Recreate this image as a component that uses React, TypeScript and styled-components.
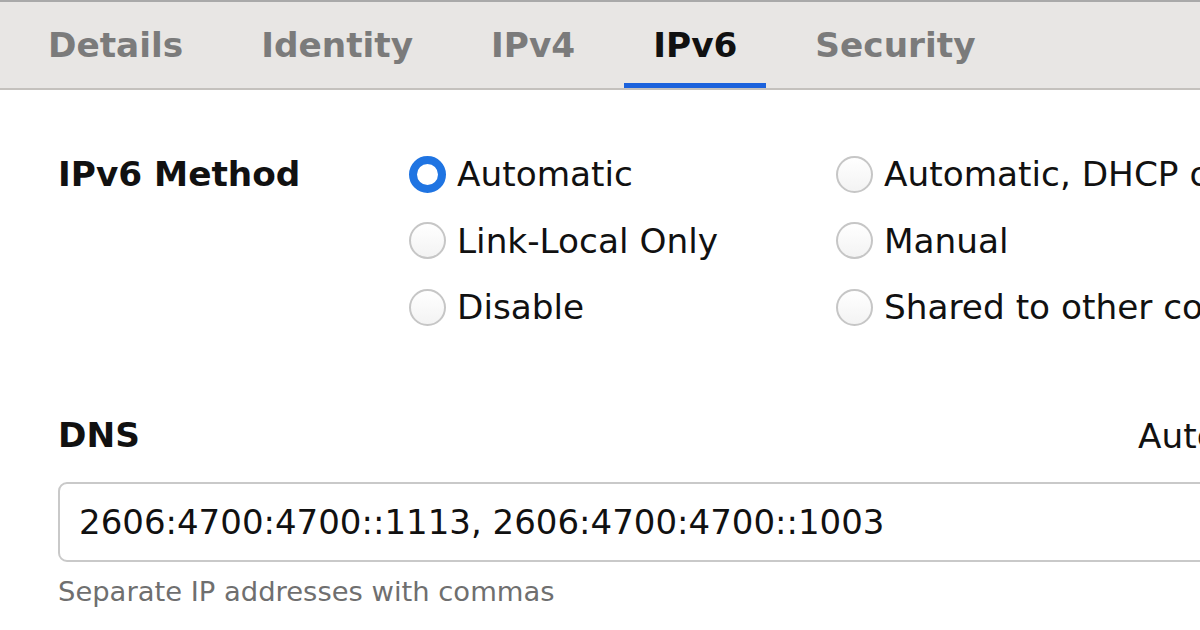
import React from "react";
import styled, { createGlobalStyle } from "styled-components";

const GlobalStyle = createGlobalStyle`
  html, body {
    margin: 0;
    padding: 0;
    width: 1200px;
    height: 630px;
    overflow: hidden;
    background: #ffffff;
  }
  body {
    font-family: "DejaVu Sans", "Liberation Sans", sans-serif;
    color: #111111;
  }
`;

const Window = styled.div`
  width: 1492px;
  height: 630px;
  background: #ffffff;
`;

const TabBar = styled.div`
  display: flex;
  gap: 20px;
  height: 86px;
  padding-left: 19px;
  background: #e8e6e4;
  border-top: 2px solid #a9a9a9;
  border-bottom: 2px solid #c4c1bd;
`;

const Tab = styled.div<{ $active?: boolean }>`
  box-sizing: border-box;
  height: 86px;
  padding: 5px 29px 0;
  display: flex;
  align-items: center;
  font-size: 34.3px;
  font-weight: bold;
  color: ${(p) => (p.$active ? "#111111" : "#7b7b7b")};
  border-bottom: 5px solid ${(p) => (p.$active ? "#1b62dc" : "transparent")};
  white-space: nowrap;
`;

const Content = styled.div`
  padding: 51px 58px 0;
`;

const MethodSection = styled.div`
  display: grid;
  grid-template-columns: 351px 1fr;
`;

const SectionLabel = styled.div`
  font-size: 34.3px;
  font-weight: bold;
  line-height: 66.5px;
  white-space: nowrap;
`;

const RadioGrid = styled.div`
  display: grid;
  grid-template-columns: 427px 1fr;
  grid-auto-rows: 66.5px;
`;

const RadioItem = styled.label`
  display: flex;
  align-items: center;
  gap: 11px;
  font-size: 34.3px;
  white-space: nowrap;
`;

const RadioCircle = styled.span<{ $checked?: boolean }>`
  box-sizing: border-box;
  width: 37px;
  height: 37px;
  border-radius: 50%;
  flex: none;
  background: ${(p) =>
    p.$checked ? "#ffffff" : "linear-gradient(#ffffff, #f3f3f3)"};
  border: ${(p) => (p.$checked ? "8px solid #1f74e2" : "2.5px solid #c6c6c6")};
`;

const DnsHeader = styled.div`
  margin-top: 70px;
  display: flex;
  align-items: center;
  justify-content: space-between;
  height: 50px;
`;

const HeaderRight = styled.div`
  display: flex;
  align-items: center;
  gap: 24px;
  font-size: 34.3px;
`;

const Switch = styled.span`
  display: inline-block;
  width: 96px;
  height: 48px;
  border-radius: 24px;
  background: #1f74e2;
`;

const TextInput = styled.div`
  box-sizing: border-box;
  margin-top: 21px;
  height: 80px;
  border: 2px solid #c9c9c9;
  border-radius: 9px;
  padding-left: 19px;
  display: flex;
  align-items: center;
  font-size: 34px;
  white-space: nowrap;
  background: #ffffff;
`;

const Hint = styled.div`
  margin-top: 12px;
  font-size: 27.4px;
  line-height: 36px;
  color: #6f6f6f;
`;

const tabs = ["Details", "Identity", "IPv4", "IPv6", "Security"];

const options: { label: string; checked?: boolean }[] = [
  { label: "Automatic", checked: true },
  { label: "Automatic, DHCP only" },
  { label: "Link-Local Only" },
  { label: "Manual" },
  { label: "Disable" },
  { label: "Shared to other computers" },
];

export default function App() {
  return (
    <>
      <GlobalStyle />
      <Window>
        <TabBar>
          {tabs.map((t) => (
            <Tab key={t} $active={t === "IPv6"}>
              {t}
            </Tab>
          ))}
        </TabBar>
        <Content>
          <MethodSection>
            <SectionLabel>IPv6 Method</SectionLabel>
            <RadioGrid>
              {options.map((o) => (
                <RadioItem key={o.label}>
                  <RadioCircle $checked={o.checked} />
                  {o.label}
                </RadioItem>
              ))}
            </RadioGrid>
          </MethodSection>
          <DnsHeader>
            <SectionLabel>DNS</SectionLabel>
            <HeaderRight>
              Automatic
              <Switch />
            </HeaderRight>
          </DnsHeader>
          <TextInput>2606:4700:4700::1113, 2606:4700:4700::1003</TextInput>
          <Hint>Separate IP addresses with commas</Hint>
        </Content>
      </Window>
    </>
  );
}
